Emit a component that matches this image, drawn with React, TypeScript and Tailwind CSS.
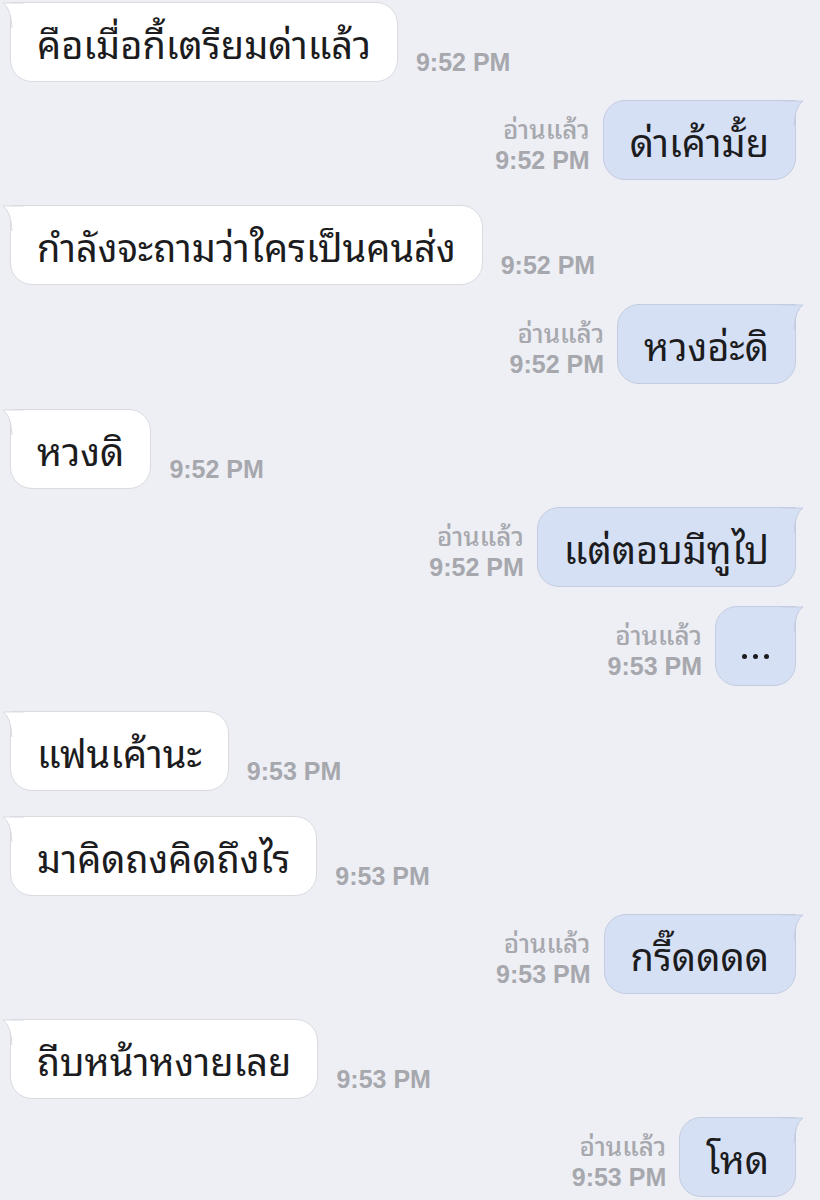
import React from 'react'

type Msg = { side: 'in' | 'out'; text: string; time: string }

const messages: Msg[] = [
  { side: 'in', text: 'คือเมื่อกี้เตรียมด่าแล้ว', time: '9:52 PM' },
  { side: 'out', text: 'ด่าเค้ามั้ย', time: '9:52 PM' },
  { side: 'in', text: 'กำลังจะถามว่าใครเป็นคนส่ง', time: '9:52 PM' },
  { side: 'out', text: 'หวงอ่ะดิ', time: '9:52 PM' },
  { side: 'in', text: 'หวงดิ', time: '9:52 PM' },
  { side: 'out', text: 'แต่ตอบมีทูไป', time: '9:52 PM' },
  { side: 'out', text: '...', time: '9:53 PM' },
  { side: 'in', text: 'แฟนเค้านะ', time: '9:53 PM' },
  { side: 'in', text: 'มาคิดถงคิดถึงไร', time: '9:53 PM' },
  { side: 'out', text: 'กรี๊ดดดด', time: '9:53 PM' },
  { side: 'in', text: 'ถีบหน้าหงายเลย', time: '9:53 PM' },
  { side: 'out', text: 'โหด', time: '9:53 PM' },
]

const thai = '"Noto Sans Thai Looped", "Loma", "Garuda", "Thonburi", "Noto Sans Thai", "Noto Sans", "DejaVu Sans", sans-serif'

function Tail({ side }: { side: 'in' | 'out' }) {
  const fill = side === 'in' ? '#ffffff' : '#d6e0f5'
  const stroke = side === 'in' ? '#d9dbe1' : '#c3cce0'
  if (side === 'in') {
    return (
      <svg className="absolute -left-[9px] -top-px" width="22" height="26" viewBox="0 0 22 26">
        <path d="M22 1 L1 1 Q9 6 10 26 L22 26 Z" fill={fill} />
        <path d="M22 1 L1 1 Q9 6 10 26" fill="none" stroke={stroke} strokeWidth="1" />
      </svg>
    )
  }
  return (
    <svg className="absolute -right-[9px] -top-px" width="22" height="26" viewBox="0 0 22 26">
      <path d="M0 1 L21 1 Q13 6 12 26 L0 26 Z" fill={fill} />
      <path d="M0 1 L21 1 Q13 6 12 26" fill="none" stroke={stroke} strokeWidth="1" />
    </svg>
  )
}

function Bubble({ msg }: { msg: Msg }) {
  const isIn = msg.side === 'in'
  return (
    <div
      className={`relative h-[80px] flex items-center px-[26px] border text-[38px] text-[#1c1c1e] ${
        isIn
          ? 'bg-white border-[#d9dbe1] rounded-[22px] rounded-tl-none'
          : 'bg-[#d6e0f5] border-[#c3cce0] rounded-[22px] rounded-tr-none'
      }`}
    >
      <Tail side={msg.side} />
      {msg.text === '...' ? (
        <span className="relative flex gap-[6px] mt-[22px]">
          <span className="w-[5px] h-[5px] rounded-full bg-[#1c1c1e]" />
          <span className="w-[5px] h-[5px] rounded-full bg-[#1c1c1e]" />
          <span className="w-[5px] h-[5px] rounded-full bg-[#1c1c1e]" />
        </span>
      ) : (
        <span className="relative leading-none">{msg.text}</span>
      )}
    </div>
  )
}

export default function App() {
  return (
    <div
      className="min-h-[1200px] w-[820px] bg-[#eeeff4] flex flex-col overflow-hidden"
      style={{ fontFamily: thai }}
    >
      {messages.map((m, i) =>
        m.side === 'in' ? (
          <div key={i} className={`flex items-end pl-[10px] ${i === 0 ? 'mt-[2px]' : 'mt-[25px]'}`}>
            <Bubble msg={m} />
            <span className="ml-[18px] mb-[5px] text-[25px] leading-[30px] font-bold text-[#a6a8ae] font-['Liberation_Sans',sans-serif]">
              {m.time}
            </span>
          </div>
        ) : (
          <div key={i} className="flex items-end justify-end pr-[24px] mt-[18.4px]">
            <div className="mr-[13px] mb-[6px] flex flex-col items-end text-[#a6a8ae] font-['Liberation_Sans',sans-serif]">
              <span className="text-[26px] leading-[32px] mb-[3px] font-medium" style={{ fontFamily: thai }}>
                อ่านแล้ว
              </span>
              <span className="text-[25px] font-bold leading-[28px]">{m.time}</span>
            </div>
            <Bubble msg={m} />
          </div>
        )
      )}
    </div>
  )
}
